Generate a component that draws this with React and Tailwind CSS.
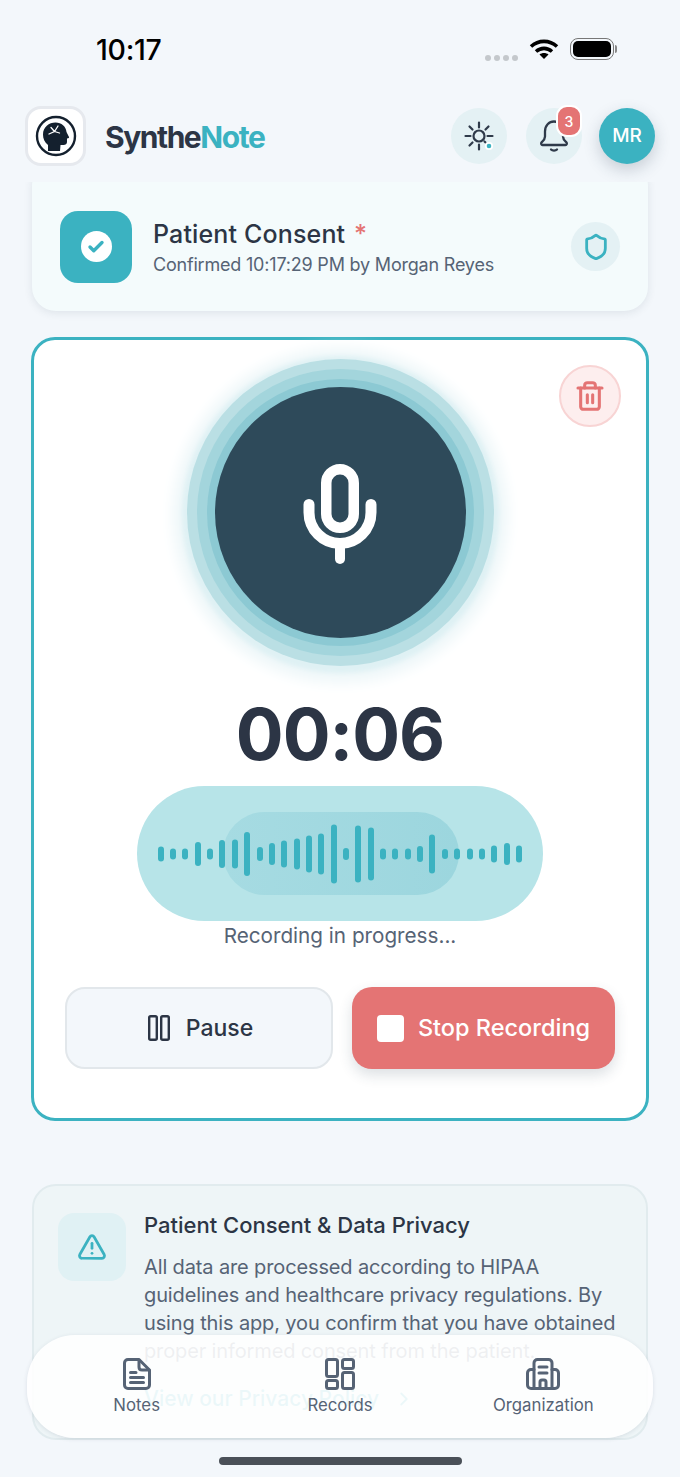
import React from "react";
import { Shield, TriangleAlert, ChevronRight, Trash2, Check } from "lucide-react";

// center x and height of each wave bar
const bars = [
  [161, 15], [173, 11], [185, 11], [198, 24], [210, 11], [222, 28], [235, 29], [247, 44],
  [260, 14], [272, 22], [284, 27], [297, 31], [309, 37], [321, 41], [334, 59], [346, 12],
  [358, 57], [371, 53], [383, 11], [395, 11], [408, 11], [420, 16], [432, 39], [445, 10],
  [457, 11], [470, 11], [482, 11], [494, 17], [507, 22], [519, 17],
];

function BrainLogo() {
  return (
    <svg width="44" height="44" viewBox="0 0 44 44">
      <circle cx="22" cy="22" r="19" fill="none" stroke="#14202e" strokeWidth="2.4" />
      <path
        d="M14 37v-6C10.500 28 9 24.500 9 20.500 9 13 15 8.500 21.500 8.500c6 0 10.500 4 11 9.500l2.500 5c.3.700-.3 1.200-2 1.500v3.500c0 2-1.500 3-3.500 3h-3l-.5 6z"
        fill="#14202e"
      />
      <path d="M15 20l5.500-2.500L24 12M20.500 17.500L17 13.500M20.500 17.500l5 1.500" stroke="#fff" strokeWidth="1.300" fill="none" strokeLinecap="round" />
    </svg>
  );
}

function SunIcon() {
  return (
    <svg width="32" height="32" viewBox="0 0 32 32" fill="none" stroke="#2f3a4a" strokeWidth="2.200" strokeLinecap="round">
      <circle cx="16" cy="16" r="5.500" />
      <path d="M16 2.500v5M16 24.500v5M2.500 16h5M24.500 16h5M6.500 6.500l3 3M25.500 6.500l-3 3M6.500 25.500l3-3M21.500 21.500l1 1" />
      <circle cx="26" cy="26" r="3.200" fill="#3bb2c1" stroke="#fff" strokeWidth="1.800" />
    </svg>
  );
}

function BellIcon() {
  return (
    <svg width="32" height="36" viewBox="0 0 32 36" fill="none" stroke="#2f3a4a" strokeWidth="2.300" strokeLinecap="round" strokeLinejoin="round">
      <path d="M3.500 24.500c1.500-1.500 3.500-3 3.500-6v-5c0-6 4-10 9-10s9 4 9 10v5c0 3 2 4.500 3.500 6 .8 1 .2 2.500-1 2.500h-23c-1.200 0-1.800-1.500-1-2.500z" />
      <path d="M13 31.500c1.500 1.500 4.500 1.500 6 0" />
    </svg>
  );
}

function MicIcon() {
  return (
    <svg width="76" height="102" viewBox="0 0 76 102" fill="none" stroke="#fff" strokeLinecap="round">
      <rect x="24.250" y="7.250" width="27.500" height="58.500" rx="13.750" strokeWidth="10.500" />
      <path d="M7 42.500v8c0 17 14 31 31 31s31-14 31-31v-8" strokeWidth="11" />
      <path d="M38 84v13" strokeWidth="10" />
    </svg>
  );
}

function NavItem({ label, children }) {
  return (
    <div className="flex flex-col items-center gap-[5px]">
      <div className="h-[32px] flex items-center justify-center">{children}</div>
      <span className="text-[16.800px] leading-[20px] text-[#566375]">{label}</span>
    </div>
  );
}

export default function App() {
  return (
    <div className="relative w-[680px] h-[1477px] overflow-hidden flex flex-col bg-[#f3f7fb] font-['Inter','Noto_Sans',sans-serif]">
      {/* Status bar */}
      <div className="h-[100px] shrink-0 flex justify-between pl-[96px] pt-[33px] pr-[63px]">
        <span className="text-[28.500px] leading-[34px] font-medium text-black tracking-[-0.3px]">10:17</span>
        <div className="flex items-start gap-[11px] pt-[5px]">
          <div className="flex gap-[3px] mt-[17px]">
            <span className="w-[6px] h-[6px] rounded-full bg-[#c4c8cc]" />
            <span className="w-[6px] h-[6px] rounded-full bg-[#c4c8cc]" />
            <span className="w-[6px] h-[6px] rounded-full bg-[#c4c8cc]" />
            <span className="w-[6px] h-[6px] rounded-full bg-[#c4c8cc]" />
          </div>
          <svg width="30" height="22" viewBox="0 0 30 22" fill="none" stroke="#000" strokeWidth="3.600">
            <path d="M2 8.500c7.500-6.800 18.500-6.800 26 0" />
            <path d="M7 13.500c4.800-4.200 11.200-4.200 16 0" />
            <path d="M15 21l-4.500-4.500c2.600-2 6.400-2 9 0z" fill="#000" stroke="none" />
          </svg>
          <div className="flex items-center gap-[1px]">
            <div className="w-[44px] h-[22px] rounded-[8px] border-[1.500px] border-[#777] p-[2px]">
              <div className="w-full h-full rounded-[5px] bg-black" />
            </div>
            <div className="w-[2px] h-[8px] rounded-r bg-[#888]" />
          </div>
        </div>
      </div>

      {/* Header */}
      <header className="h-[82px] shrink-0 flex items-start justify-between pl-[25px] pr-[25px] pt-[6px]">
        <div className="flex items-center gap-[19px]">
          <div className="w-[61px] h-[60px] rounded-[16px] bg-white border-[3px] border-[#e6e9ee] flex items-center justify-center">
            <BrainLogo />
          </div>
          <div className="text-[30px] leading-[36px] font-bold tracking-[-1.450px] mt-[1px]">
            <span className="text-[#2c3545]">Synthe</span>
            <span className="text-[#3bb2c1]">Note</span>
          </div>
        </div>
        <div className="flex items-center gap-[19px] mt-[2px]">
          <div className="w-[56px] h-[56px] rounded-full bg-[#e4f1f4] flex items-center justify-center">
            <SunIcon />
          </div>
          <div className="relative w-[56px] h-[56px] rounded-full bg-[#e4f1f4] flex items-center justify-center">
            <BellIcon />
            <span className="absolute -top-[3px] right-[0px] w-[26px] h-[32px] rounded-[11px] bg-[#e47474] border-[2px] border-white flex items-center justify-center text-white text-[14px] font-medium">3</span>
          </div>
          <div className="-ml-[2px] w-[56px] h-[56px] rounded-full bg-[#3bb2c1] flex items-center justify-center text-white text-[19px] font-medium shadow-[0_6px_16px_rgba(40,60,80,0.22)]">MR</div>
        </div>
      </header>

      <main className="flex-1 overflow-hidden px-[32px]">
        {/* Consent card */}
        <section className="-mt-[20px] h-[149px] rounded-[24px] bg-[#f4fbfc] shadow-[0_2px_8px_rgba(40,60,80,0.1)] flex items-center justify-between pl-[28px] pr-[28px] pt-[20px]">
          <div className="flex items-center gap-[21px]">
            <div className="w-[72px] h-[72px] rounded-[18px] bg-[#3bb2c1] flex items-center justify-center">
              <div className="w-[31px] h-[31px] rounded-full bg-white flex items-center justify-center">
                <Check size={18} color="#3bb2c1" strokeWidth={4.500} />
              </div>
            </div>
            <div className="mt-[2px]">
              <div className="text-[25px] leading-[32px] font-medium text-[#2c3545] tracking-[0.15px]">
                Patient Consent <span className="text-[#e47474] ml-[2px]">*</span>
              </div>
              <div className="text-[18px] leading-[26px] text-[#566375] mt-[2px] tracking-[-0.2px]">Confirmed 10:17:29 PM by Morgan Reyes</div>
            </div>
          </div>
          <div className="w-[49px] h-[49px] rounded-full bg-[#e4f1f4] flex items-center justify-center">
            <Shield size={28} color="#3bb2c1" strokeWidth={2.400} />
          </div>
        </section>

        {/* Recorder card */}
        <section className="relative mt-[26px] -mx-[1px] h-[784px] rounded-[24px] bg-white border-[3px] border-[#3bb2c1] flex flex-col items-center">
          <button className="absolute top-[25px] right-[25px] w-[62px] h-[62px] rounded-full bg-[#fdeeee] border-[2px] border-[#f8d4d4] flex items-center justify-center">
            <Trash2 size={32} color="#e47474" strokeWidth={2.300} />
          </button>

          <div className="mt-[47px] w-[251px] h-[251px] rounded-full bg-[#2e4a5a] flex items-center justify-center shrink-0 shadow-[0_0_0_8px_#8cc9d3,0_0_0_18px_#a3d5dc,0_0_0_28px_#badfe4,0_2px_4px_33px_#dff1f4,0_3px_14px_42px_#eef7f9]">
            <MicIcon />
          </div>

          <div className="mt-[46px] text-[71px] leading-[100px] font-bold text-[#2c3545] tracking-[-1px]">00:06</div>

          {/* Wave form */}
          <div className="relative mt-[2px] w-[406px] h-[135px] shrink-0 rounded-full bg-[#b7e4e8]">
            <div className="absolute left-[86px] top-[26px] w-[236px] h-[83px] rounded-full bg-gradient-to-r from-[#a6dbe2] to-[#9cd6de]" />
            <svg className="absolute inset-0" width="406" height="135" viewBox="137 786 406 135">
              {bars.map(([x, h]) => (
                <rect key={x} x={x - 3} y={854 - h / 2} width="6" height={h} rx="3" fill="#3bb2c1" />
              ))}
            </svg>
          </div>
          <div className="mt-[1px] text-[20.700px] leading-[28px] text-[#566375]">Recording in progress...</div>

          <div className="mt-[37px] w-full px-[31px] flex gap-[19px]">
            <button className="w-[268px] h-[82px] pl-[3px] rounded-[20px] bg-[#f3f7fb] border-[2px] border-[#e2e7eb] flex items-center justify-center gap-[16px] text-[23px] font-medium text-[#2c3545]">
              <svg width="22" height="26" viewBox="0 0 22 26" fill="none" stroke="#2c3545" strokeWidth="2.400">
                <rect x="1.200" y="1.200" width="7.600" height="23.600" rx="1.500" />
                <rect x="13.200" y="1.200" width="7.600" height="23.600" rx="1.500" />
              </svg>
              Pause
            </button>
            <button className="w-[263px] h-[82px] rounded-[20px] bg-[#e47474] flex items-center justify-center gap-[14px] text-[23.500px] font-medium text-white shadow-[0_6px_14px_rgba(40,60,80,0.16)]">
              <span className="w-[27px] h-[27px] rounded-[4px] bg-white" />
              Stop Recording
            </button>
          </div>
        </section>

        {/* Privacy card */}
        <section className="mt-[63px] h-[256px] rounded-[24px] bg-[#eef5f7] border-[2px] border-[#e1ebee] flex gap-[18px] pl-[24px] pr-[20px] pt-[26px]">
          <div className="w-[68px] h-[68px] mt-[1px] shrink-0 rounded-[16px] bg-[#e0f1f4] flex items-center justify-center">
            <TriangleAlert size={30} color="#3bb2c1" strokeWidth={2.200} />
          </div>
          <div>
            <div className="text-[22px] leading-[26px] font-medium text-[#2c3545]">Patient Consent &amp; Data Privacy</div>
            <p className="mt-[15px] text-[20px] leading-[28px] text-[#566375] tracking-[-0.13px]">
              All data are processed according to HIPAA guidelines and healthcare privacy regulations. By using this app, you confirm that you have obtained proper informed consent from the patient.
            </p>
            <div className="mt-[20px] flex items-center gap-[14px] text-[21px] leading-[28px] font-medium text-[#3bb2c1]">
              View our Privacy Policy <ChevronRight size={22} />
            </div>
          </div>
        </section>
      </main>

      {/* Bottom nav */}
      <nav className="absolute left-[27px] top-[1335px] w-[626px] h-[103px] rounded-[48px] bg-white/90 shadow-[0_1px_4px_rgba(40,60,80,0.12)] grid grid-cols-3 pt-[23px] pl-[8px] pr-[8px]">
        <NavItem label="Notes">
          <svg width="28" height="32" viewBox="0 0 28 32" fill="none" stroke="#566375" strokeWidth="3" strokeLinejoin="round" strokeLinecap="round">
            <path d="M5 1.500h11L26.500 12v15c0 2-1.500 3.500-3.500 3.500H5c-2 0-3.500-1.500-3.500-3.500V5C1.500 3 3 1.500 5 1.500z" />
            <path d="M16 2v7c0 2 1.500 3 3 3h7M7.500 14.500H13M7.500 19.500h13M7.500 24.500h13" />
          </svg>
        </NavItem>
        <NavItem label="Records">
          <svg width="30" height="32" viewBox="0 0 30 32" fill="none" stroke="#566375" strokeWidth="3">
            <rect x="1.500" y="1.500" width="11" height="17" rx="2" />
            <rect x="17.500" y="1.500" width="11" height="9" rx="2" />
            <rect x="1.500" y="22.500" width="11" height="8" rx="2" />
            <rect x="17.500" y="14.500" width="11" height="16" rx="2" />
          </svg>
        </NavItem>
        <NavItem label="Organization">
          <svg width="34" height="32" viewBox="0 0 34 32" fill="none" stroke="#566375" strokeWidth="3" strokeLinecap="round" strokeLinejoin="round">
            <path d="M8 30.500H5c-2 0-3.500-1.500-3.500-3.500V15c0-2 1.500-3.500 3.500-3.500h3M26 11.500h3c2 0 3.500 1.500 3.500 3.500v12c0 2-1.500 3.500-3.500 3.500h-3" />
            <path d="M8 30.500V5c0-2 1.500-3.500 3.500-3.500h11C24.500 1.500 26 3 26 5v25.500z" />
            <path d="M13 9h8M13 15h8M14 30v-6c0-1 .8-2 2-2h2c1.200 0 2 1 2 2v6" />
          </svg>
        </NavItem>
      </nav>

      {/* Home indicator */}
      <div className="absolute left-[219px] top-[1457px] w-[243px] h-[8px] rounded-full bg-[#4a5058]" />
    </div>
  );
}
